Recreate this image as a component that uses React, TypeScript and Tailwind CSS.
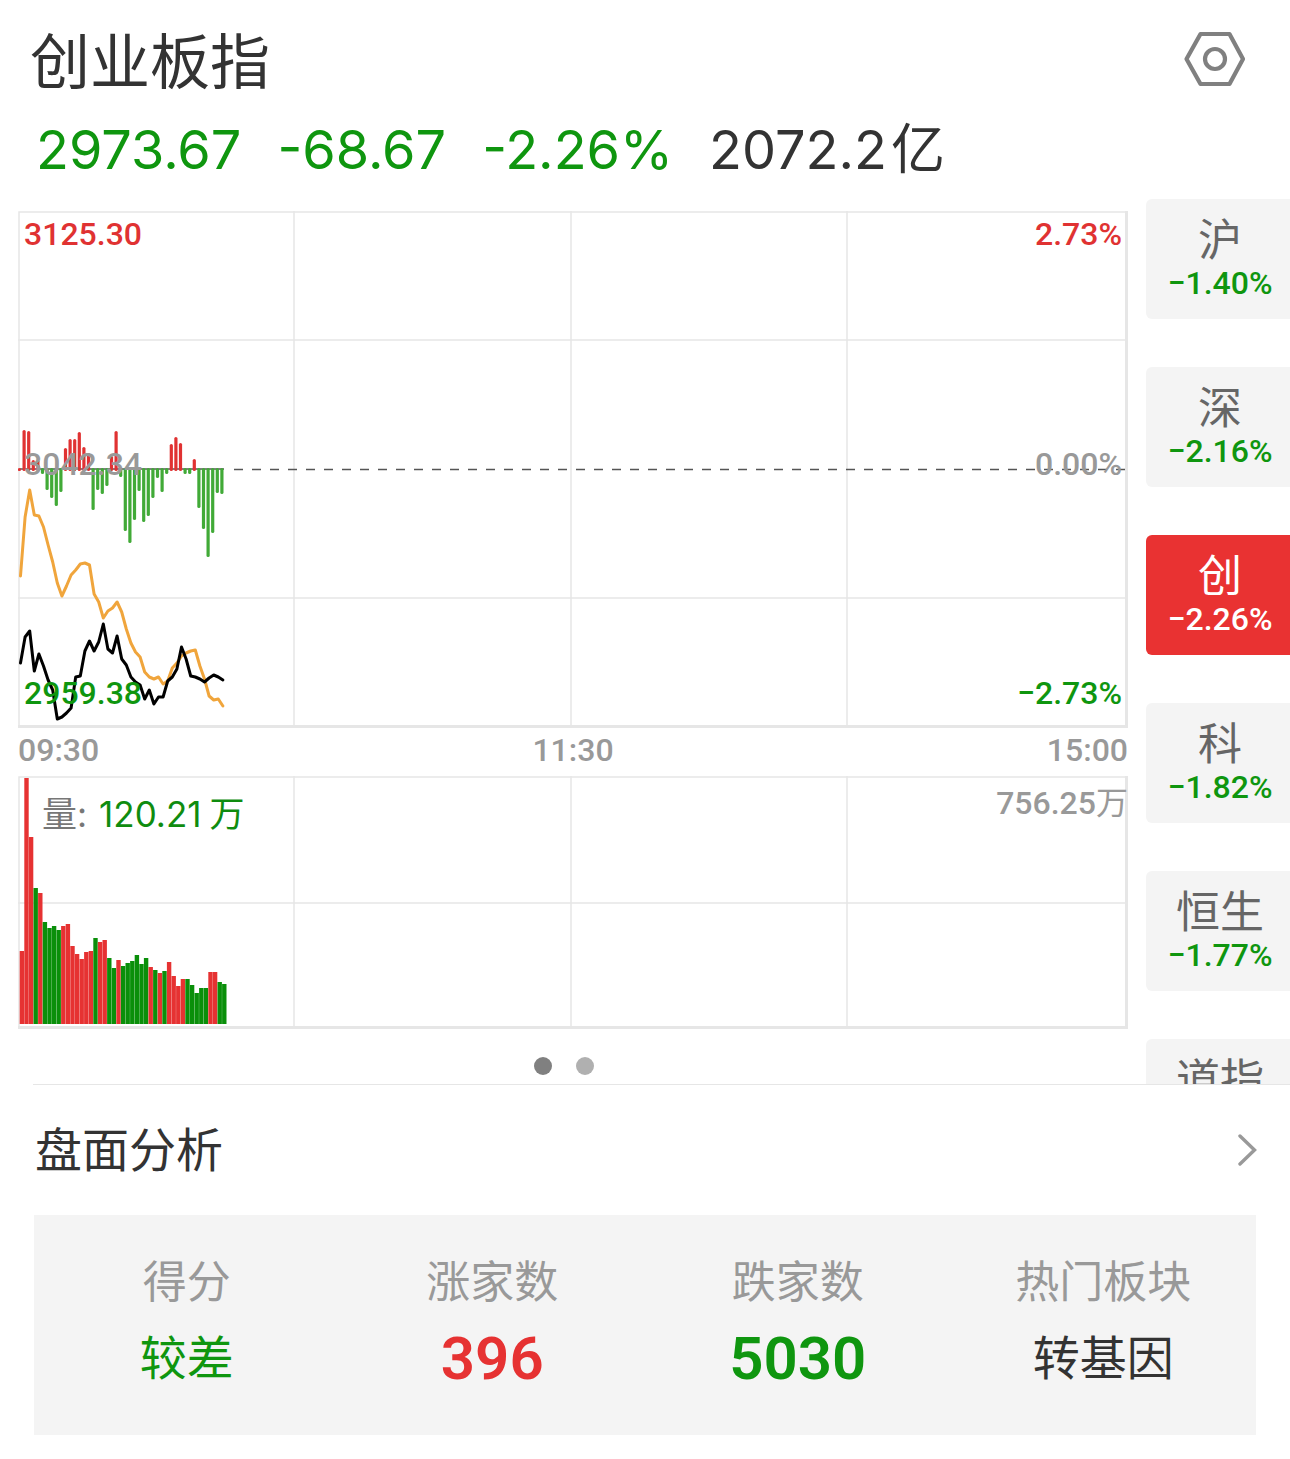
import { useState } from 'react';

interface IndexTab {
    name: string;
    change?: string;
}

interface Stat {
    label: string;
    value: string;
    className: string;
}

const TABS: IndexTab[] = [
    { name: '沪', change: '−1.40%' },
    { name: '深', change: '−2.16%' },
    { name: '创', change: '−2.26%' },
    { name: '科', change: '−1.82%' },
    { name: '恒生', change: '−1.77%' },
    { name: '道指' },
];

const STATS: Stat[] = [
    { label: '得分', value: '较差', className: 'text-[47px] text-[#0f960f]' },
    { label: '涨家数', value: '396', className: 'text-6xl font-semibold text-[#e63232]' },
    { label: '跌家数', value: '5030', className: 'text-6xl font-semibold text-[#0f960f]' },
    { label: '热门板块', value: '转基因', className: 'text-[47px] text-[#333]' },
];

// One entry per minute since 09:30, the full session is 240 minutes
const STEP = 4.6;

// Bars around the previous close, positive is up
const MOMENTUM = [
    0, 38, 37, 8, 8, -3, -19, -27, -35, -21, 20, 29, 29, 36, 21, 15, -39, -19, -23, -15, 12, 37, -6,
    -60, -72, -49, -20, -51, -45, -27, -7, -21, -3, 24, 31, 25, -3, -3, 9, -37, -58, -86, -62, -22, -23,
];

const AVERAGE = [
    365, 306, 279, 304, 305, 316, 334, 351, 372, 385, 375, 364, 359, 353, 352, 354, 383, 391, 407, 400,
    397, 391, 401, 418, 432, 441, 446, 461, 466, 468, 466, 473, 470, 457, 452, 445, 442, 440, 439, 455,
    468, 485, 489, 488, 495,
];

const PRICE = [
    452, 426, 420, 460, 443, 455, 469, 479, 508, 506, 502, 497, 466, 465, 440, 430, 440, 431, 413, 438,
    442, 425, 448, 454, 466, 471, 474, 488, 479, 493, 486, 486, 470, 466, 458, 436, 448, 465, 466, 468,
    471, 467, 464, 466, 469,
];

const VOLUME = [
    73, 246, 187, 136, 131, 102, 96, 98, 94, 98, 100, 78, 70, 65, 72, 73, 86, 82, 84, 66, 56, 64, 58, 61,
    63, 69, 60, 66, 57, 54, 51, 53, 62, 48, 38, 45, 45, 39, 31, 36, 36, 52, 52, 42, 40,
];

// r = rising minute, g = falling minute
const VOLUME_SIDE = 'rrrgrggggrrrrrrrgrrggrggggggrgrgrrrrgggggrrgg';

const toPoints = (values: number[]) => values.map((y, i) => `${(2.5 + i * STEP).toFixed(1)},${y}`).join(' ');

function Grid({ height, rows }: { height: number; rows: number[] }) {
    return (
        <g stroke="#e6e6e6" strokeWidth="1.5" fill="none">
            {rows.map((y) => (
                <line key={y} x1="0" x2="1110" y1={y} y2={y} />
            ))}
            {[276, 553, 829].map((x) => (
                <line key={x} x1={x} x2={x} y1="0" y2={height} />
            ))}
            <path d={`M1 ${height}V1H1110`} />
            <path d={`M1108.5 0V${height - 1.5}H0`} strokeWidth="3" />
        </g>
    );
}

function PriceChart() {
    return (
        <div className="relative text-[32px] leading-10 font-medium">
            <svg className="block h-[517px] w-full" viewBox="0 0 1110 517" preserveAspectRatio="none" aria-hidden="true">
                <Grid height={517} rows={[129, 387]} />
                <line x1="2" x2="206" y1="258" y2="258" stroke="#555" strokeWidth="1.5" />
                <line x1="216" x2="1110" y1="258.5" y2="258.5" stroke="#555" strokeWidth="1.5" strokeDasharray="9 9" />
                {MOMENTUM.map((v, i) => (
                    <line
                        key={i}
                        x1={1.5 + i * STEP}
                        x2={1.5 + i * STEP}
                        y1="258.5"
                        y2={258.5 - v}
                        stroke={v < 0 ? '#41aa37' : '#e03232'}
                        strokeWidth="3.2"
                        strokeLinecap="round"
                    />
                ))}
                <g fill="none" strokeWidth="3" strokeLinejoin="round" strokeLinecap="round">
                    <polyline points={toPoints(AVERAGE)} stroke="#f0a53c" />
                    <polyline points={toPoints(PRICE)} stroke="#000" />
                </g>
            </svg>
            <span className="absolute top-[3px] left-1.5 text-[#e03232]">3125.30</span>
            <span className="absolute top-[3px] right-1.5 text-[#e03232]">2.73%</span>
            <span className="absolute top-[233px] left-1.5 text-[#999]">3042.34</span>
            <span className="absolute top-[233px] right-1.5 text-[#999]">0.00%</span>
            <span className="absolute bottom-[15px] left-1.5 text-[#0f960f]">2959.38</span>
            <span className="absolute right-1.5 bottom-[15px] text-[#0f960f]">−2.73%</span>
        </div>
    );
}

function VolumeChart() {
    return (
        <div className="relative leading-10">
            <svg className="block h-[253px] w-full" viewBox="0 0 1110 253" preserveAspectRatio="none" aria-hidden="true">
                <Grid height={253} rows={[127]} />
                {VOLUME.map((v, i) => (
                    <rect
                        key={i}
                        x={1.7 + i * STEP}
                        y={248 - v}
                        width="4.4"
                        height={v}
                        fill={VOLUME_SIDE[i] === 'r' ? '#e63232' : '#0a8f0a'}
                    />
                ))}
            </svg>
            <div className="absolute top-[18px] left-6 flex gap-3 text-[35px] leading-10 font-[Inter,'Noto_Sans_CJK_SC',sans-serif]">
                <span className="text-[#777]">量:</span>
                <span className="text-[#0f8c0f]">
                    120.21<span className="ml-2">万</span>
                </span>
            </div>
            <span className="absolute top-[7px] right-0 text-[32px] text-[#999]">
                <span className="font-medium">756.25</span>万
            </span>
        </div>
    );
}

export default function App() {
    const [active, setActive] = useState('创');

    return (
        <main className="bg-white font-[Roboto,'Noto_Sans_CJK_SC',sans-serif] text-[#333]">
            <header className="flex h-[100px] items-end justify-between pr-[43px] pl-[30px]">
                <h1 className="text-6xl leading-[72px]">创业板指</h1>
                <button type="button" aria-label="设置" className="mb-[13px]">
                    <svg className="block h-14 w-16" viewBox="0 0 64 56" fill="none" stroke="#808080" strokeLinejoin="round">
                        <path d="M17.5 3H46.5L60 28L46.5 53H17.5L3.5 28Z" strokeWidth="4.2" />
                        <circle cx="32" cy="28" r="10" strokeWidth="4.2" />
                    </svg>
                </button>
            </header>

            <div className="flex h-[99px] items-center gap-9 pl-9 font-[Inter,'Noto_Sans_CJK_SC',sans-serif] text-[54px] leading-none whitespace-nowrap text-[#0f960f]">
                <span>2973.67</span>
                <span>-68.67</span>
                <span>-2.26%</span>
                <span className="text-[#333]">
                    2072.2<span className="ml-1">亿</span>
                </span>
            </div>

            <section className="flex h-[885px] overflow-hidden">
                <div className="min-w-0 flex-1 pt-3 pr-[18px] pl-[18px]">
                    <PriceChart />
                    <div className="flex h-12 items-center justify-between pb-1 text-[32px] leading-none font-medium text-[#999]">
                        <span>09:30</span>
                        <span>11:30</span>
                        <span>15:00</span>
                    </div>
                    <VolumeChart />
                    <div className="mt-7 flex justify-center gap-6">
                        <button type="button" aria-label="第1页" className="size-[18px] rounded-full bg-[#808080]" />
                        <button type="button" aria-label="第2页" className="mr-[18px] size-[18px] rounded-full bg-[#b0b0b0]" />
                    </div>
                </div>

                <nav className="flex w-36 shrink-0 flex-col gap-12">
                    {TABS.map((tab) => (
                        <button
                            key={tab.name}
                            type="button"
                            onClick={() => setActive(tab.name)}
                            className={`flex h-[120px] shrink-0 flex-col items-center rounded-l-md pt-5 pl-1
                                ${tab.name === active ? 'bg-[#e93232] text-white' : 'bg-[#f4f4f4] text-[#666]'}`}
                        >
                            <span className="text-[44px] leading-[44px]">{tab.name}</span>
                            {tab.change && (
                                <span
                                    className={`text-[32px] leading-10 font-medium ${tab.name === active ? '' : 'text-[#0f960f]'}`}
                                >
                                    {tab.change}
                                </span>
                            )}
                        </button>
                    ))}
                </nav>
            </section>

            <section className="pb-6">
                <a href="#analysis" className="ml-[33px] flex h-[131px] items-center justify-between border-t border-[#e6e6e6] pr-[33px]">
                    <h2 className="pl-0.5 text-[47px] leading-none">盘面分析</h2>
                    <svg className="h-8 w-5" viewBox="0 0 20 32" fill="none" stroke="#999" strokeWidth="3.4" strokeLinecap="round" aria-hidden="true">
                        <path d="M3 2L17.5 16L3 30" />
                    </svg>
                </a>
                <dl className="mx-[34px] grid h-[220px] grid-cols-4 bg-[#f4f4f4] pt-[42px] text-center">
                    {STATS.map((stat) => (
                        <div key={stat.label}>
                            <dt className="text-[44px] leading-[52px] text-[#999]">{stat.label}</dt>
                            <dd className={`mt-3.5 leading-[72px] ${stat.className}`}>{stat.value}</dd>
                        </div>
                    ))}
                </dl>
            </section>
        </main>
    );
}
